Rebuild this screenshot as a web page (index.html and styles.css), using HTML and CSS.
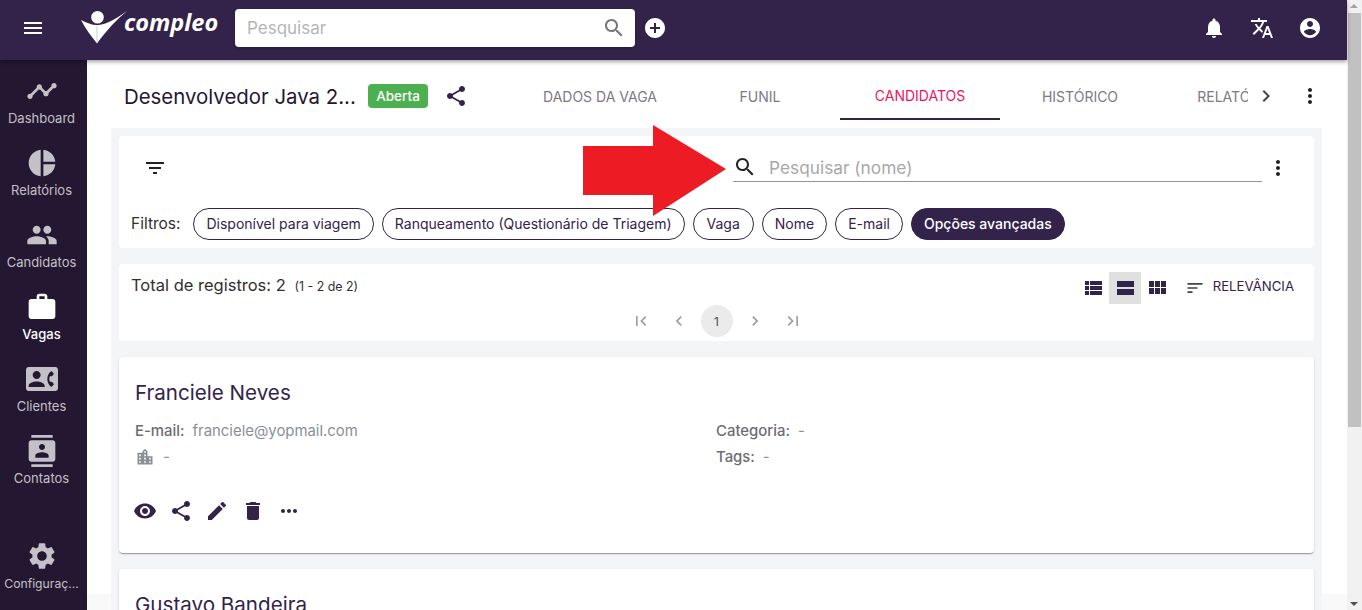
FILE: index.html
```html
<!DOCTYPE html>
<html lang="pt-BR">

<head>
    <meta charset="UTF-8">
    <meta name="viewport" content="width=device-width, initial-scale=1.0">
    <title>Compleo - Vaga</title>
    <link rel="stylesheet" href="styles.css">
</head>

<body>
    <svg class="sprite" xmlns="http://www.w3.org/2000/svg">
        <symbol id="i-menu" viewBox="0 0 24 24"><path d="M3 18h18v-2H3v2zm0-5h18v-2H3v2zm0-7v2h18V6H3z"/></symbol>
        <symbol id="i-timeline" viewBox="0 0 24 24"><path d="M23 8c0 1.1-.9 2-2 2-.18 0-.35-.02-.51-.07l-3.56 3.55c.05.16.07.34.07.52 0 1.1-.9 2-2 2s-2-.9-2-2c0-.18.02-.36.07-.52l-2.55-2.55c-.16.05-.34.07-.52.07s-.36-.02-.52-.07l-4.55 4.56c.05.16.07.33.07.51 0 1.1-.9 2-2 2s-2-.9-2-2 .9-2 2-2c.18 0 .35.02.51.07l4.56-4.55C8.02 9.36 8 9.18 8 9c0-1.1.9-2 2-2s2 .9 2 2c0 .18-.02.36-.07.52l2.55 2.55c.16-.05.34-.07.52-.07s.36.02.52.07l3.55-3.56C19.02 8.35 19 8.18 19 8c0-1.1.9-2 2-2s2 .9 2 2z"/></symbol>
        <symbol id="i-pie" viewBox="0 0 24 24"><path d="M11 2v20c-5.07-.5-9-4.79-9-10s3.93-9.5 9-10zm2.03 0v8.99H22c-.47-4.74-4.24-8.52-8.97-8.99zm0 11.01V22c4.74-.47 8.5-4.25 8.97-8.99h-8.97z"/></symbol>
        <symbol id="i-people" viewBox="0 0 24 24"><path d="M16 11c1.66 0 2.99-1.34 2.99-3S17.66 5 16 5c-1.66 0-3 1.34-3 3s1.34 3 3 3zm-8 0c1.66 0 2.99-1.34 2.99-3S9.66 5 8 5C6.34 5 5 6.34 5 8s1.34 3 3 3zm0 2c-2.33 0-7 1.17-7 3.5V19h14v-2.5c0-2.33-4.67-3.5-7-3.5zm8 0c-.29 0-.62.02-.97.05 1.16.84 1.97 1.97 1.97 3.45V19h6v-2.5c0-2.33-4.67-3.5-7-3.5z"/></symbol>
        <symbol id="i-work" viewBox="0 0 24 24"><path d="M20 6h-4V4c0-1.11-.89-2-2-2h-4c-1.11 0-2 .89-2 2v2H4c-1.11 0-1.99.89-1.99 2L2 19c0 1.11.89 2 2 2h16c1.11 0 2-.89 2-2V8c0-1.11-.89-2-2-2zm-6 0h-4V4h4v2z"/></symbol>
        <symbol id="i-contact-phone" viewBox="0 0 24 24"><path d="M22 3H2C.9 3 0 3.9 0 5v14c0 1.1.9 2 2 2h20c1.1 0 1.99-.9 1.99-2L24 5c0-1.1-.9-2-2-2zM8 6c1.66 0 3 1.34 3 3s-1.34 3-3 3-3-1.34-3-3 1.34-3 3-3zm6 12H2v-1c0-2 4-3.1 6-3.1s6 1.1 6 3.1v1zm3.85-4h1.64L21 16l-1.99 1.99c-1.31-.98-2.28-2.38-2.73-3.99-.18-.64-.28-1.31-.28-2s.1-1.36.28-2c.45-1.62 1.42-3.01 2.73-3.99L21 8l-1.51 2h-1.64c-.22.63-.35 1.3-.35 2s.13 1.37.35 2z"/></symbol>
        <symbol id="i-contacts" viewBox="0 0 24 24"><path d="M20 0H4v2h16V0zM4 24h16v-2H4v2zM20 4H4c-1.1 0-2 .9-2 2v12c0 1.1.9 2 2 2h16c1.1 0 2-.9 2-2V6c0-1.1-.9-2-2-2zm-8 2.75c1.24 0 2.25 1.01 2.25 2.25s-1.01 2.25-2.25 2.25S9.75 10.24 9.75 9 10.76 6.75 12 6.75zM17 17H7v-1.5c0-1.67 3.33-2.5 5-2.5s5 .83 5 2.5V17z"/></symbol>
        <symbol id="i-settings" viewBox="0 0 24 24"><path d="M19.14 12.94c.04-.3.06-.61.06-.94 0-.32-.02-.64-.07-.94l2.03-1.58c.18-.14.23-.41.12-.61l-1.92-3.32c-.12-.22-.37-.29-.59-.22l-2.39.96c-.5-.38-1.03-.7-1.62-.94l-.36-2.54c-.04-.24-.24-.41-.48-.41h-3.84c-.24 0-.43.17-.47.41l-.36 2.54c-.59.24-1.13.57-1.62.94l-2.39-.96c-.22-.08-.47 0-.59.22L2.74 8.87c-.12.21-.08.47.12.61l2.03 1.58c-.05.3-.09.63-.09.94s.02.64.07.94l-2.03 1.58c-.18.14-.23.41-.12.61l1.92 3.32c.12.22.37.29.59.22l2.39-.96c.5.38 1.03.7 1.62.94l.36 2.54c.05.24.24.41.48.41h3.84c.24 0 .44-.17.47-.41l.36-2.54c.59-.24 1.13-.56 1.62-.94l2.39.96c.22.08.47 0 .59-.22l1.92-3.32c.12-.22.07-.47-.12-.61l-2.01-1.58zM12 15.6c-1.98 0-3.6-1.62-3.6-3.6s1.62-3.6 3.6-3.6 3.6 1.62 3.6 3.6-1.62 3.6-3.6 3.6z"/></symbol>
        <symbol id="i-search" viewBox="0 0 24 24"><path d="M15.5 14h-.79l-.28-.27C15.41 12.59 16 11.11 16 9.5 16 5.91 13.09 3 9.5 3S3 5.91 3 9.5 5.91 16 9.5 16c1.61 0 3.09-.59 4.23-1.57l.27.28v.79l5 4.99L20.49 19l-4.99-5zm-6 0C7.01 14 5 11.99 5 9.5S7.01 5 9.5 5 14 7.01 14 9.5 11.99 14 9.5 14z"/></symbol>
        <symbol id="i-add" viewBox="0 0 24 24"><path d="M12 2C6.48 2 2 6.48 2 12s4.48 10 10 10 10-4.48 10-10S17.52 2 12 2zm5 11h-4v4h-2v-4H7v-2h4V7h2v4h4v2z"/></symbol>
        <symbol id="i-bell" viewBox="0 0 24 24"><path d="M12 22c1.1 0 2-.9 2-2h-4c0 1.1.89 2 2 2zm6-6v-5c0-3.07-1.64-5.64-4.5-6.32V4c0-.83-.67-1.5-1.5-1.5s-1.5.67-1.5 1.5v.68C7.63 5.36 6 7.92 6 11v5l-2 2v1h16v-1l-2-2z"/></symbol>
        <symbol id="i-translate" viewBox="0 0 24 24"><path d="M12.87 15.07l-2.54-2.51.03-.03c1.74-1.94 2.98-4.17 3.71-6.53H17V4h-7V2H8v2H1v1.99h11.17C11.5 7.92 10.44 9.75 9 11.35 8.07 10.32 7.3 9.19 6.69 8h-2c.73 1.63 1.73 3.17 2.98 4.56l-5.09 5.02L4 19l5-5 3.11 3.11.76-2.04zM18.5 10h-2L12 22h2l1.12-3h4.75L21 22h2l-4.5-12zm-2.62 7l1.62-4.33L19.12 17h-3.24z"/></symbol>
        <symbol id="i-account" viewBox="0 0 24 24"><path d="M12 2C6.48 2 2 6.48 2 12s4.48 10 10 10 10-4.48 10-10S17.52 2 12 2zm0 3c1.66 0 3 1.34 3 3s-1.34 3-3 3-3-1.34-3-3 1.34-3 3-3zm0 14.2c-2.5 0-4.71-1.28-6-3.22.03-1.99 4-3.08 6-3.08 1.99 0 5.97 1.09 6 3.08-1.29 1.94-3.5 3.22-6 3.22z"/></symbol>
        <symbol id="i-share" viewBox="0 0 24 24"><path d="M18 16.08c-.76 0-1.44.3-1.96.77L8.91 12.7c.05-.23.09-.46.09-.7s-.04-.47-.09-.7l7.05-4.11c.54.5 1.25.81 2.04.81 1.66 0 3-1.34 3-3s-1.34-3-3-3-3 1.34-3 3c0 .24.04.47.09.7L8.04 9.81C7.5 9.31 6.79 9 6 9c-1.66 0-3 1.34-3 3s1.34 3 3 3c.79 0 1.5-.31 2.04-.81l7.12 4.16c-.05.21-.08.43-.08.65 0 1.61 1.31 2.92 2.92 2.92 1.61 0 2.92-1.31 2.92-2.92s-1.31-2.92-2.92-2.92z"/></symbol>
        <symbol id="i-more-vert" viewBox="0 0 24 24"><path d="M12 8c1.1 0 2-.9 2-2s-.9-2-2-2-2 .9-2 2 .9 2 2 2zm0 2c-1.1 0-2 .9-2 2s.9 2 2 2 2-.9 2-2-.9-2-2-2zm0 6c-1.1 0-2 .9-2 2s.9 2 2 2 2-.9 2-2-.9-2-2-2z"/></symbol>
        <symbol id="i-more-horiz" viewBox="0 0 24 24"><path d="M6 10c-1.1 0-2 .9-2 2s.9 2 2 2 2-.9 2-2-.9-2-2-2zm12 0c-1.1 0-2 .9-2 2s.9 2 2 2 2-.9 2-2-.9-2-2-2zm-6 0c-1.1 0-2 .9-2 2s.9 2 2 2 2-.9 2-2-.9-2-2-2z"/></symbol>
        <symbol id="i-filter" viewBox="0 0 24 24"><path d="M10 18h4v-2h-4v2zM3 6v2h18V6H3zm3 7h12v-2H6v2z"/></symbol>
        <symbol id="i-sort" viewBox="0 0 24 24"><path d="M3 18h6v-2H3v2zM3 6v2h18V6H3zm0 7h12v-2H3v2z"/></symbol>
        <symbol id="i-next" viewBox="0 0 24 24"><path d="M10 6L8.59 7.41 13.17 12l-4.58 4.59L10 18l6-6z"/></symbol>
        <symbol id="i-prev" viewBox="0 0 24 24"><path d="M15.41 7.41L14 6l-6 6 6 6 1.41-1.41L10.83 12z"/></symbol>
        <symbol id="i-first" viewBox="0 0 24 24"><path d="M18.41 16.59L13.82 12l4.59-4.59L17 6l-6 6 6 6zM6 6h2v12H6z"/></symbol>
        <symbol id="i-last" viewBox="0 0 24 24"><path d="M5.59 7.41L10.18 12l-4.59 4.59L7 18l6-6-6-6zM16 6h2v12h-2z"/></symbol>
        <symbol id="i-view-list" viewBox="0 0 24 24"><path d="M4 14h4v-4H4v4zm0 5h4v-4H4v4zM4 9h4V5H4v4zm5 5h12v-4H9v4zm0 5h12v-4H9v4zM9 5v4h12V5H9z"/></symbol>
        <symbol id="i-view-stream" viewBox="0 0 24 24"><path d="M4 19h17v-6H4v6zM4 5v6h17V5H4z"/></symbol>
        <symbol id="i-view-module" viewBox="0 0 24 24"><path d="M4 11h5V5H4v6zm0 7h5v-6H4v6zm6 0h5v-6h-5v6zm6 0h5v-6h-5v6zm-6-7h5V5h-5v6zm6-6v6h5V5h-5z"/></symbol>
        <symbol id="i-eye" viewBox="0 0 24 24"><path d="M12 4.5C7 4.5 2.73 7.61 1 12c1.73 4.39 6 7.5 11 7.5s9.27-3.11 11-7.5c-1.73-4.39-6-7.5-11-7.5zM12 17c-2.76 0-5-2.24-5-5s2.24-5 5-5 5 2.24 5 5-2.24 5-5 5zm0-8c-1.66 0-3 1.34-3 3s1.34 3 3 3 3-1.34 3-3-1.34-3-3-3z"/></symbol>
        <symbol id="i-edit" viewBox="0 0 24 24"><path d="M3 17.25V21h3.75L17.81 9.94l-3.75-3.75L3 17.25zM20.71 7.04c.39-.39.39-1.02 0-1.41l-2.34-2.34c-.39-.39-1.02-.39-1.41 0l-1.83 1.83 3.75 3.75 1.83-1.83z"/></symbol>
        <symbol id="i-delete" viewBox="0 0 24 24"><path d="M6 19c0 1.1.9 2 2 2h8c1.1 0 2-.9 2-2V7H6v12zM19 4h-3.5l-1-1h-5l-1 1H5v2h14V4z"/></symbol>
        <symbol id="i-city" viewBox="0 0 24 24"><path d="M15 11V5l-3-3-3 3v2H3v14h18V11h-6zm-8 8H5v-2h2v2zm0-4H5v-2h2v2zm0-4H5V9h2v2zm6 8h-2v-2h2v2zm0-4h-2v-2h2v2zm0-4h-2V9h2v2zm0-4h-2V5h2v2zm6 12h-2v-2h2v2zm0-4h-2v-2h2v2z"/></symbol>
    </svg>

    <div class="app">
        <header class="topbar">
            <button class="icon-btn menu-btn"><svg class="ic-24"><use href="#i-menu"/></svg></button>
            <div class="logo">
                <svg class="logo-mark" viewBox="0 0 48 38">
                    <circle cx="17.500" cy="7.300" r="6.300"/>
                    <path d="M1 10C7 13 13 15.500 18 15C28 14 37 8 47 1C36 10 27 20 17 33.500C11 26 5 18 1 10Z"/>
                    <path class="logo-line" d="M17 16V33"/>
                </svg>
                <span class="logo-text">compleo</span>
            </div>
            <div class="top-search">
                <span>Pesquisar</span>
                <svg class="ic-24"><use href="#i-search"/></svg>
            </div>
            <svg class="ic-24 top-add"><use href="#i-add"/></svg>
            <div class="top-actions">
                <svg class="ic-24"><use href="#i-bell"/></svg>
                <svg class="ic-24"><use href="#i-translate"/></svg>
                <svg class="ic-24"><use href="#i-account"/></svg>
            </div>
        </header>

        <div class="body-row">
            <nav class="sidebar">
                <a class="nav-item"><svg class="ic-32"><use href="#i-timeline"/></svg><span>Dashboard</span></a>
                <a class="nav-item"><svg class="ic-32"><use href="#i-pie"/></svg><span>Relatórios</span></a>
                <a class="nav-item"><svg class="ic-32"><use href="#i-people"/></svg><span>Candidatos</span></a>
                <a class="nav-item active"><svg class="ic-32"><use href="#i-work"/></svg><span>Vagas</span></a>
                <a class="nav-item"><svg class="ic-32"><use href="#i-contact-phone"/></svg><span>Clientes</span></a>
                <a class="nav-item"><svg class="ic-32"><use href="#i-contacts"/></svg><span>Contatos</span></a>
                <a class="nav-item nav-bottom"><svg class="ic-32"><use href="#i-settings"/></svg><span>Configuraç...</span></a>
            </nav>

            <main class="main">
                <div class="job-head">
                    <h1 class="job-title">Desenvolvedor Java 2...</h1>
                    <span class="status">Aberta</span>
                    <svg class="ic-24 job-share"><use href="#i-share"/></svg>
                    <div class="tabs">
                        <a class="tab">DADOS DA VAGA</a>
                        <a class="tab">FUNIL</a>
                        <a class="tab active">CANDIDATOS</a>
                        <a class="tab">HISTÓRICO</a>
                        <a class="tab">RELATÓRIOS</a>
                    </div>
                    <svg class="ic-24 tabs-next"><use href="#i-next"/></svg>
                    <svg class="ic-24 job-more"><use href="#i-more-vert"/></svg>
                </div>

                <div class="panel">
                    <section class="card filters">
                        <div class="filter-top">
                            <svg class="ic-24 filter-icon"><use href="#i-filter"/></svg>
                            <div class="list-search">
                                <svg class="ic-24"><use href="#i-search"/></svg>
                                <span>Pesquisar (nome)</span>
                            </div>
                            <svg class="ic-24 filter-more"><use href="#i-more-vert"/></svg>
                        </div>
                        <div class="chips">
                            <span class="chips-label">Filtros:</span>
                            <span class="chip">Disponível para viagem</span>
                            <span class="chip">Ranqueamento (Questionário de Triagem)</span>
                            <span class="chip chip-wide">Vaga</span>
                            <span class="chip">Nome</span>
                            <span class="chip">E-mail</span>
                            <span class="chip chip-dark">Opções avançadas</span>
                        </div>
                    </section>

                    <section class="card results">
                        <div class="results-top">
                            <div class="total">Total de registros: 2 <small>(1 - 2 de 2)</small></div>
                            <div class="views">
                                <span class="view-btn"><svg class="ic-24"><use href="#i-view-list"/></svg></span>
                                <span class="view-btn selected"><svg class="ic-24"><use href="#i-view-stream"/></svg></span>
                                <span class="view-btn"><svg class="ic-24"><use href="#i-view-module"/></svg></span>
                                <span class="sort"><svg class="ic-20"><use href="#i-sort"/></svg><span>RELEVÂNCIA</span></span>
                            </div>
                        </div>
                        <div class="pager">
                            <svg class="ic-20"><use href="#i-first"/></svg>
                            <svg class="ic-20"><use href="#i-prev"/></svg>
                            <span class="page-num">1</span>
                            <svg class="ic-20"><use href="#i-next"/></svg>
                            <svg class="ic-20"><use href="#i-last"/></svg>
                        </div>
                    </section>

                    <article class="card person">
                        <h2>Franciele Neves</h2>
                        <div class="person-grid">
                            <div class="field"><b>E-mail:</b> franciele@yopmail.com</div>
                            <div class="field"><b>Categoria:</b> -</div>
                            <div class="field"><svg class="ic-20"><use href="#i-city"/></svg> -</div>
                            <div class="field"><b>Tags:</b> -</div>
                        </div>
                        <div class="person-actions">
                            <svg class="ic-24"><use href="#i-eye"/></svg>
                            <svg class="ic-24"><use href="#i-share"/></svg>
                            <svg class="ic-24"><use href="#i-edit"/></svg>
                            <svg class="ic-24"><use href="#i-delete"/></svg>
                            <svg class="ic-24"><use href="#i-more-horiz"/></svg>
                        </div>
                    </article>

                    <article class="card person">
                        <h2>Gustavo Bandeira</h2>
                    </article>
                </div>
            </main>
        </div>
    </div>

    <div class="scrollbar">
        <span class="scroll-arrow"></span>
        <span class="scroll-thumb"></span>
        <span class="scroll-arrow down"></span>
    </div>

    <!-- seta vermelha colada por cima da tela -->
    <svg class="red-arrow" viewBox="0 0 146 94">
        <path d="M0 21H70V0L143 44L70 91V70H0Z"/>
    </svg>
</body>
</html>
```

FILE: styles.css
```css
* {
    box-sizing: border-box;
}
html, body {
    height: 100%;
}
body {
    font-family: Inter, "Noto Sans", sans-serif;
    margin: 0;
    overflow: hidden;
    display: flex;
    background: #fff;
    color: #33234a;
}
.sprite {
    display: none;
}
svg {
    fill: currentColor;
    flex: none;
}
.ic-20 { width: 20px; height: 20px; }
.ic-24 { width: 24px; height: 24px; }
.ic-32 { width: 32px; height: 32px; }

.app {
    flex: 1;
    min-width: 0;
    display: flex;
    flex-direction: column;
    height: 610px;
}

/* barra superior */
.topbar {
    height: 60px;
    flex: none;
    display: flex;
    align-items: center;
    padding-bottom: 4px;
    background: #33234a;
    color: #fff;
    position: relative;
    z-index: 2;
    box-shadow: 0 2px 4px rgba(0, 0, 0, 0.35);
}
.icon-btn {
    border: none;
    background: none;
    color: inherit;
    padding: 0;
}
.menu-btn {
    width: 24px;
    height: 24px;
    margin-left: 21px;
}
.logo {
    display: flex;
    align-items: flex-start;
    margin-left: 35px;
    height: 44px;
    width: 155px;
}
.logo-mark {
    width: 48px;
    height: 38px;
    fill: #fff;
    margin-top: 4px;
}
.logo-line {
    fill: none;
    stroke: #b9b5c0;
    stroke-width: 0.7;
}
.logo-text {
    font-family: "Open Sans", sans-serif;
    font-style: italic;
    font-weight: 700;
    font-size: 23.500px;
    line-height: 30px;
    margin-top: 1px;
    margin-left: -4px;
}
.top-search {
    width: 400px;
    height: 38px;
    background: #fff;
    border-radius: 4px;
    display: flex;
    align-items: center;
    justify-content: space-between;
    padding: 0 9px 0 12px;
    font-size: 17px;
    color: #b5b5b5;
    box-shadow: 0 1px 3px rgba(0, 0, 0, 0.3);
}
.top-search svg {
    color: #757575;
}
.top-add {
    margin-left: 8px;
}
.top-actions {
    margin-left: auto;
    display: flex;
    gap: 24px;
    padding-right: 25px;
}

.body-row {
    flex: 1;
    min-height: 0;
    display: flex;
}

/* menu lateral */
.sidebar {
    width: 87px;
    flex: none;
    background: #241731;
    display: flex;
    flex-direction: column;
    padding: 15px 4px 0 0;
    color: #c4c0c8;
}
.nav-item {
    height: 72px;
    display: flex;
    flex-direction: column;
    align-items: center;
    font-size: 13px;
    line-height: 18px;
    white-space: nowrap;
}
.nav-item span {
    margin-top: 2px;
}
.nav-item.active {
    color: #fff;
    font-weight: 500;
}
.nav-bottom {
    margin-top: auto;
    height: 70px;
    font-size: 12.200px;
}
.nav-item.nav-bottom span {
    margin-top: 3px;
}

.main {
    flex: 1;
    min-width: 0;
    display: flex;
    flex-direction: column;
    overflow: hidden;
    background: linear-gradient(#fff 534px, #f9f9f9 534px);
}

/* cabecalho da vaga */
.job-head {
    height: 68px;
    flex: none;
    display: flex;
    align-items: center;
    padding: 4px 0 0 37px;
}
.job-title {
    margin: 0;
    font-size: 20.400px;
    font-weight: 400;
    color: #241731;
    width: 232px;
    white-space: nowrap;
}
.status {
    margin-left: 12px;
    width: 60px;
    height: 24px;
    border-radius: 4px;
    background: #4caf50;
    color: #fff;
    font-size: 13.500px;
    font-weight: 500;
    display: flex;
    align-items: center;
    justify-content: center;
}
.job-share {
    margin-left: 16px;
}
.tabs {
    display: flex;
    margin-left: 52px;
    width: 728px;
    height: 48px;
    overflow: hidden;
}
.tab {
    width: 160px;
    flex: none;
    height: 48px;
    display: flex;
    align-items: center;
    justify-content: center;
    font-size: 14px;
    color: #7d7a82;
    white-space: nowrap;
}
.tab.active {
    color: #f0145f;
    border-bottom: 2px solid #33234a;
}
.tabs-next {
    margin-left: 6px;
    color: #444;
}
.job-more {
    margin-left: 20px;
    color: #222;
}

/* area cinza */
.panel {
    flex: 1;
    margin: 0 25px 0 24px;
    padding: 8px;
    background: #f4f5f7;
    display: flex;
    flex-direction: column;
    gap: 16px;
}
.card {
    background: #fff;
    border-radius: 4px;
    flex: none;
}
.filters {
    height: 112px;
    padding: 0 12px;
}
.filter-top {
    height: 62px;
    display: flex;
    align-items: center;
}
.filter-icon {
    margin: 2px 0 0 12px;
    color: #222;
}
.list-search {
    margin-left: 566px;
    width: 529px;
    height: 28px;
    margin-top: 2px;
    border-bottom: 1px solid #949494;
    display: flex;
    align-items: center;
    gap: 12px;
    padding-bottom: 1px;
    font-size: 17.300px;
    color: #a8a8a8;
}
.list-search svg {
    color: #222;
    margin-bottom: 1px;
}
.filter-more {
    margin: 2px 0 0 4px;
    color: #222;
}
.chips {
    display: flex;
    align-items: center;
    gap: 8px;
    height: 32px;
    margin-top: 10px;
}
.chips-label {
    font-size: 15.500px;
    color: #33302c;
    margin-right: 5px;
    padding-bottom: 1px;
}
.chip {
    height: 32px;
    border: 1px solid #33234a;
    border-radius: 16px;
    padding: 0 12px 2px;
    font-size: 14px;
    display: flex;
    align-items: center;
    white-space: nowrap;
}
.chip-wide {
    padding: 0 13px 2px;
}
.chip-dark {
    background: #33234a;
    color: #fff;
    font-weight: 500;
}
.results {
    height: 77px;
    padding: 8px 12px 0;
}
.results-top {
    height: 32px;
    display: flex;
    justify-content: space-between;
    align-items: center;
}
.total {
    font-size: 16.500px;
    color: #33302c;
    margin-top: -6px;
}
.total small {
    font-size: 12.400px;
    margin-left: 4px;
}
.views {
    display: flex;
    align-items: center;
}
.view-btn {
    width: 32px;
    height: 32px;
    display: flex;
    align-items: center;
    justify-content: center;
    color: #33234a;
}
.view-btn.selected {
    background: #e0e0e0;
}
.sort {
    display: flex;
    align-items: center;
    gap: 8px;
    font-size: 13.200px;
    color: #33234a;
    margin-left: 12px;
    margin-right: 8px;
}
.sort svg {
    color: #444;
    margin-top: -1px;
}
.sort span {
    margin-top: -4px;
}
.pager {
    display: flex;
    justify-content: center;
    align-items: center;
    gap: 18px;
    color: #9e9e9e;
    margin-top: 1px;
}
.page-num {
    width: 32px;
    height: 32px;
    border-radius: 50%;
    background: #ebebeb;
    color: #5a4a3a;
    font-size: 12px;
    display: flex;
    align-items: center;
    justify-content: center;
    margin: 0 -6px;
}
.person {
    height: 196px;
    padding: 22px 16px 0;
    box-shadow: 0 2px 1px -1px rgba(0, 0, 0, 0.2), 0 1px 1px rgba(0, 0, 0, 0.14), 0 1px 3px rgba(0, 0, 0, 0.12);
}
.person h2 {
    margin: 0;
    font-size: 20.600px;
    line-height: 28px;
    font-weight: 400;
    color: #33234a;
}
.person-grid {
    display: grid;
    grid-template-columns: 581px 1fr;
    grid-auto-rows: 26px;
    margin-top: 11px;
    font-size: 14.900px;
    color: #8a8f96;
}
.field {
    display: flex;
    align-items: center;
    gap: 8px;
}
.field b {
    font-weight: 500;
    color: #6d6d75;
}
.person-actions {
    display: flex;
    gap: 12px;
    margin: 29px 0 0 -2px;
    color: #33234a;
}

/* barra de rolagem desenhada */
.scrollbar {
    width: 15px;
    height: 610px;
    flex: none;
    background: #f1f1f1;
    position: relative;
    padding: 13px 1px 0;
}
.scroll-arrow {
    position: absolute;
    top: 4px;
    left: 3px;
    border-left: 4px solid transparent;
    border-right: 4px solid transparent;
    border-bottom: 4px solid #a3a3a3;
}
.scroll-arrow.down {
    top: auto;
    bottom: 4px;
    border-bottom: none;
    border-top: 4px solid #505050;
}
.scroll-thumb {
    display: block;
    height: 414px;
    background: #c1c1c1;
}

.red-arrow {
    position: absolute;
    left: 583px;
    top: 125px;
    width: 146px;
    height: 94px;
    fill: #ed1c24;
    z-index: 3;
}
```
